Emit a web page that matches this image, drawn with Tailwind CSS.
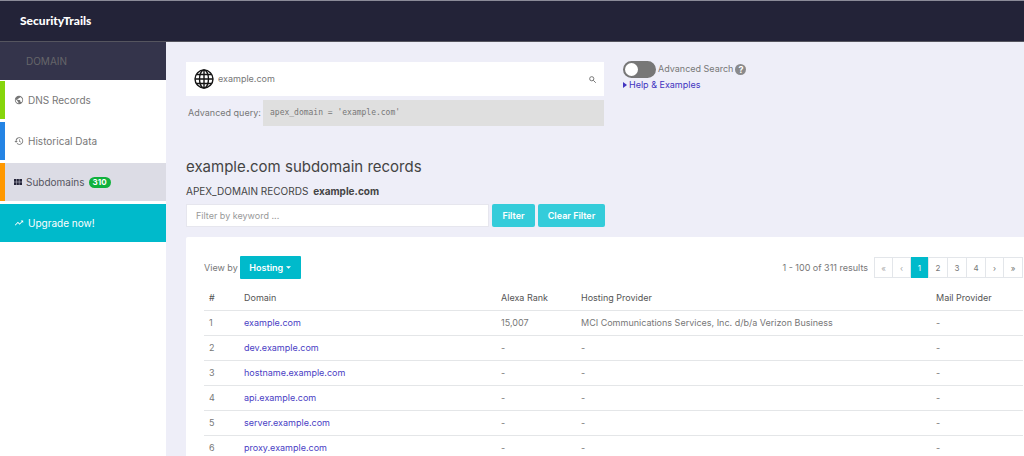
<!DOCTYPE html>
<html lang="en">
<head>
<meta charset="utf-8">
<title>SecurityTrails</title>
<script src="https://cdn.jsdelivr.net/npm/@tailwindcss/browser@4"></script>
</head>
<body class="flex h-screen flex-col overflow-hidden bg-[#eeeef8] font-['Inter',sans-serif] text-[9px] text-[#777777]">
<header class="flex h-[42px] shrink-0 items-center border-t border-b border-t-[#8b8b98] border-b-[#55555f] bg-[#232338] pl-5">
  <a href="#" class="font-['Lato',sans-serif] text-[12px] font-black text-white">SecurityTrails</a>
</header>
<div class="flex min-h-0 flex-1">
  <nav class="w-[166px] shrink-0 bg-white text-[10px]" aria-label="Domain">
    <h2 class="flex h-[38px] items-center bg-[#34344b] pl-[26px] text-[#66666a]">DOMAIN</h2>
    <div class="flex flex-col gap-[3px] pt-px">
      <a href="#" class="flex h-[38px] items-center gap-1 border-l-[5px] border-[#86d50b] pl-[9px]">
        <svg class="size-[10px]" viewBox="0 0 24 24" fill="currentColor"><path d="M12 2a10 10 0 1 0 0 20 10 10 0 0 0 0-20zm-1 17.93A8 8 0 0 1 4.21 10.2L9 15v1a2 2 0 0 0 2 2v1.93zm6.9-2.54A2 2 0 0 0 16 16h-1v-3a1 1 0 0 0-1-1H8v-2h2a1 1 0 0 0 1-1V7h2a2 2 0 0 0 2-2v-.41a8 8 0 0 1 2.9 12.8z"/></svg>
        DNS Records</a>
      <a href="#" class="flex h-[38px] items-center gap-1 border-l-[5px] border-[#2484e4] pl-[9px]">
        <svg class="size-[10px]" viewBox="0 0 24 24" fill="currentColor"><path d="M13 3a9 9 0 0 0-9 9H1l4 4 4-4H6a7 7 0 1 1 2.06 4.94l-1.42 1.42A9 9 0 1 0 13 3zm-1 5v5l4.28 2.54.72-1.21-3.5-2.08V8H12z"/></svg>
        Historical Data</a>
      <a href="#" aria-current="page" class="flex h-[38px] items-center gap-1 border-l-[5px] border-[#ff9800] bg-[#dcdce5] pl-[9px] text-[#55555f]">
        <svg class="h-[6px] w-[8px]" viewBox="0 0 18 13" fill="#232338"><path d="M0 0h5v6H0zM6 0h5v6H6zM12 0h6v6h-6zM0 7h5v6H0zM6 7h5v6H6zM12 7h6v6h-6z"/></svg>
        Subdomains
        <span class="flex h-[11px] items-center rounded-full bg-[#10b13c] px-1 text-[8px] font-bold text-white">310</span></a>
      <a href="#" class="flex h-[38px] items-center gap-1 bg-[#00bacb] pl-[14px] text-white">
        <svg class="size-[10px]" viewBox="0 0 24 24" fill="currentColor"><path d="M16 6l2.29 2.29-4.88 4.88-4-4L2 16.59 3.41 18l6-6 4 4 6.3-6.29L22 12V6z"/></svg>
        Upgrade now!</a>
    </div>
  </nav>
  <main class="flex min-w-0 flex-1 flex-col pt-[18px] pl-5">
    <section class="flex shrink-0 gap-[19px]">
      <div class="w-[418px] shrink-0 pt-[2px]">
        <form class="flex h-[34px] items-center bg-white px-2" onsubmit="return false">
          <svg class="size-5 shrink-0" viewBox="0 0 20 20" fill="none" stroke="#151515" stroke-width="1.4"><circle cx="10" cy="10" r="9"/><ellipse cx="10" cy="10" rx="4.5" ry="9"/><path d="M10 1v18M1 10h18M2.5 5.5h15M2.5 14.5h15"/></svg>
          <input type="text" value="example.com" aria-label="Search domain" class="min-w-0 flex-1 bg-transparent pl-1 outline-none">
          <button aria-label="Search" class="shrink-0"><svg class="size-[7px]" viewBox="0 0 14 14" fill="none" stroke="#777777" stroke-width="2"><circle cx="5.5" cy="5.5" r="4.2"/><path d="M8.5 8.5l5 5"/></svg></button>
        </form>
        <div class="mt-1 flex h-[26px] items-center">
          <span class="w-[77px] shrink-0 pl-[2px] whitespace-nowrap">Advanced query:</span>
          <code class="flex h-full flex-1 items-center bg-[#dfdfdf] pl-[7px] font-['DejaVu_Sans_Mono',monospace] text-[8px]">apex_domain = 'example.com'</code>
        </div>
      </div>
      <div>
        <div class="flex h-[18px] items-center gap-[2px]">
          <label class="flex items-center gap-[2px]">
            <input type="checkbox" role="switch" class="h-[17px] w-[33px] appearance-none rounded-full border-2 border-[#777777] bg-[#777777] before:block before:size-[13px] before:rounded-full before:bg-white checked:before:ml-4">
            <span>Advanced Search</span>
          </label>
          <button aria-label="About advanced search" class="size-[11px] rounded-full bg-[#8a8a8c] text-[9px] leading-[11px] font-bold text-white">?</button>
        </div>
        <a href="#" class="flex h-[14px] items-center gap-[2px] text-[#4234c0]"><svg class="h-[6px] w-1" viewBox="0 0 4 6" fill="currentColor"><path d="M0 0l4 3-4 3z"/></svg>Help &amp; Examples</a>
      </div>
    </section>
    <h1 class="mt-[31px] text-[15px] leading-5 text-[#444444]">example.com subdomain records</h1>
    <p class="mt-[7px] text-[10px] leading-[14px] text-[#444444]">APEX_DOMAIN RECORDS <strong class="ml-[2px]">example.com</strong></p>
    <form class="mt-[6px] flex h-[23px] shrink-0 gap-[3px]" onsubmit="return false">
      <input type="text" aria-label="Filter by keyword" placeholder="Filter by keyword ..." class="w-[303px] border border-[#e6e6ee] bg-white px-[9px] placeholder:text-[#999999]">
      <button class="w-[43px] rounded-[2px] bg-[#34ccda] font-semibold text-white">Filter</button>
      <button class="w-[67px] rounded-[2px] bg-[#34ccda] font-semibold text-white">Clear Filter</button>
    </form>
    <section class="mt-[10px] flex-1 rounded-tl-[2px] bg-white pt-[19px] pr-px pl-[18px]">
      <div class="flex h-[23px] items-center">
        <span>View by</span>
        <button class="ml-[2px] flex h-[23px] w-[61px] items-center justify-center gap-[3px] rounded-[1px] bg-[#00bacb] font-semibold text-white">Hosting<svg class="h-[3px] w-[5px]" viewBox="0 0 6 3" fill="currentColor"><path d="M0 0h6L3 3z"/></svg></button>
        <span class="ml-auto">1 - 100 of 311 results</span>
        <nav aria-label="Pages" class="ml-[6px] flex h-[21px] divide-x divide-[#e3e6ea] border border-[#e3e6ea] text-[8px]">
          <a href="#" class="flex w-[18px] items-center justify-center text-[#aaaaaa]">«</a>
          <a href="#" class="flex w-[18px] items-center justify-center text-[#aaaaaa]">‹</a>
          <a href="#" aria-current="page" class="-my-px flex w-[18px] items-center justify-center bg-[#00bacb] text-white">1</a>
          <a href="#" class="flex w-[19px] items-center justify-center">2</a>
          <a href="#" class="flex w-[19px] items-center justify-center">3</a>
          <a href="#" class="flex w-[19px] items-center justify-center">4</a>
          <a href="#" class="flex w-[18px] items-center justify-center">›</a>
          <a href="#" class="flex w-[18px] items-center justify-center">»</a>
        </nav>
      </div>
      <table class="mt-[6px] w-full table-fixed text-left [&_td]:px-[5px] [&_td]:py-0 [&_th]:px-[5px] [&_th]:py-0 [&_tr]:h-[25px] [&_tr]:border-b [&_tr]:border-[#e4e6e8] [&_a]:text-[#4a40c4]">
        <colgroup><col class="w-[35px]"><col class="w-[257px]"><col class="w-[80px]"><col><col class="w-[92px]"></colgroup>
        <thead class="text-[#555555] [&_th]:font-normal"><tr><th>#</th><th>Domain</th><th>Alexa Rank</th><th>Hosting Provider</th><th>Mail Provider</th></tr></thead>
        <tbody>
          <tr><td>1</td><td><a href="#">example.com</a></td><td>15,007</td><td>MCI Communications Services, Inc. d/b/a Verizon Business</td><td>-</td></tr>
          <tr><td>2</td><td><a href="#">dev.example.com</a></td><td>-</td><td>-</td><td>-</td></tr>
          <tr><td>3</td><td><a href="#">hostname.example.com</a></td><td>-</td><td>-</td><td>-</td></tr>
          <tr><td>4</td><td><a href="#">api.example.com</a></td><td>-</td><td>-</td><td>-</td></tr>
          <tr><td>5</td><td><a href="#">server.example.com</a></td><td>-</td><td>-</td><td>-</td></tr>
          <tr><td>6</td><td><a href="#">proxy.example.com</a></td><td>-</td><td>-</td><td>-</td></tr>
        </tbody>
      </table>
    </section>
  </main>
</div>
</body>
</html>
